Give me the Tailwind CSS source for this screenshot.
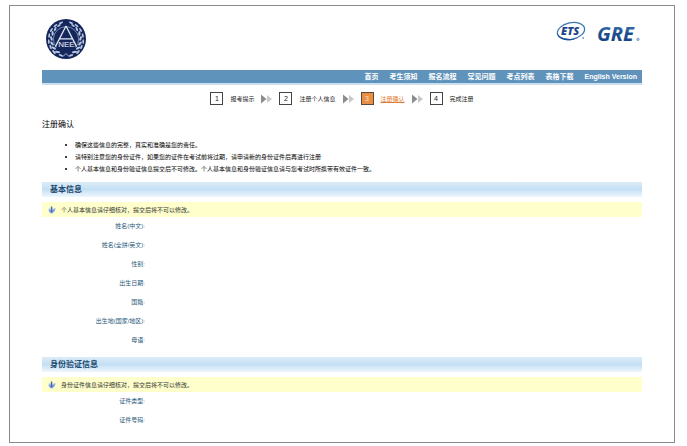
<!DOCTYPE html>
<html lang="zh-CN">
<head>
<meta charset="utf-8">
<meta name="viewport" content="width=device-width, initial-scale=1">
<title>注册确认</title>
<script src="https://cdn.jsdelivr.net/npm/@tailwindcss/browser@4"></script>
</head>
<body class="bg-white pt-[5px] font-['Liberation_Sans','Noto_Sans_CJK_SC',sans-serif] text-[6px] leading-[12px] text-[#222]">
<svg class="absolute size-0" aria-hidden="true">
  <defs>
    <linearGradient id="blue" x1="0" y1="0" x2="0" y2="1"><stop offset="0" stop-color="#4a86b8"/><stop offset=".5" stop-color="#1d4f90"/><stop offset="1" stop-color="#173c7c"/></linearGradient>
    <symbol id="arrows" viewBox="0 0 11 10"><path d="M0 0.5 5.5 5 0 9.5Z" fill="#8c8c8c"/><path d="M6 1 11 5 6 9 V1Z" fill="#c9c9c9"/></symbol>
    <symbol id="note" viewBox="0 0 8 8"><path d="M0.6 2.6 2.2 2.4 3.4 4.8 5.6 2.4 7.6 2 7 4.6 4.6 7.4 2.4 7.2 0.8 5.4Z" fill="#a3bbe4"/><path d="M2.8 0.6h1.4l.4 4.6-.8 1.4-1-1.4Z" fill="#4468b4"/><path d="M1 4.4 3.6 6.8 6.6 3.8" fill="none" stroke="#5c80c4" stroke-width=".9"/></symbol>
    <g id="leaves" fill="#b9c8e2">
      <ellipse cx="15" cy="36.4" rx="2.4" ry="1" transform="rotate(22 15 36.4)"/>
      <ellipse cx="11.6" cy="33" rx="2.6" ry="1.1" transform="rotate(5 11.6 33)"/>
      <ellipse cx="8" cy="33" rx="2.4" ry="1" transform="rotate(48 8 33)"/>
      <ellipse cx="7.8" cy="29" rx="2.5" ry="1.1" transform="rotate(28 7.8 29)"/>
      <ellipse cx="4.6" cy="28" rx="2.4" ry="1" transform="rotate(72 4.6 28)"/>
      <ellipse cx="6" cy="24.4" rx="2.4" ry="1.1" transform="rotate(48 6 24.4)"/>
      <ellipse cx="2.8" cy="22.6" rx="2.3" ry=".9" transform="rotate(88 2.8 22.6)"/>
      <ellipse cx="5.4" cy="19.4" rx="2.4" ry="1.1" transform="rotate(68 5.4 19.4)"/>
      <ellipse cx="3.2" cy="16.6" rx="2.3" ry=".9" transform="rotate(100 3.2 16.6)"/>
      <ellipse cx="6.6" cy="14.4" rx="2.4" ry="1.1" transform="rotate(90 6.6 14.4)"/>
      <ellipse cx="5.4" cy="11" rx="2.3" ry=".9" transform="rotate(120 5.4 11)"/>
      <ellipse cx="9.2" cy="10" rx="2.3" ry="1" transform="rotate(115 9.2 10)"/>
      <ellipse cx="9.4" cy="6.6" rx="2.3" ry=".9" transform="rotate(140 9.4 6.6)"/>
      <ellipse cx="13" cy="6.6" rx="2.1" ry=".9" transform="rotate(145 13 6.6)"/>
      <ellipse cx="15" cy="3.8" rx="2.2" ry=".9" transform="rotate(160 15 3.8)"/>
    </g>
  </defs>
</svg>

<div class="ml-[9px] mr-3 border border-[#8a8a8a] px-8 pb-3">
  <header>
    <div class="flex h-16 items-start justify-between pt-[13px]">
      <a href="#" aria-label="NEEA" class="ml-1">
        <svg class="size-10" viewBox="0 0 40 40">
          <circle cx="20" cy="20" r="20" fill="#15275a"/>
          <use href="#leaves"/>
          <use href="#leaves" transform="matrix(-1 0 0 1 40 0)"/>
          <path d="M10.4 28.4A12.6 12.6 0 1 1 29.6 28.4" fill="none" stroke="#8fa2ca" stroke-width=".8"/>
          <path d="M20 7 9.4 27.6M20 7 30.6 27.6M13.6 19.8h12.8" fill="none" stroke="#dfe7f5" stroke-width="1.3"/>
          <path d="m17 37.5 3-3 3 3" fill="none" stroke="#b9c8e2" stroke-width=".9"/>
          <text x="20.4" y="27.6" text-anchor="middle" font-family="Liberation Sans, sans-serif" font-size="8" fill="#f1f5fc">NEE</text>
        </svg>
      </a>
      <a href="#" aria-label="ETS GRE">
        <svg class="h-[30px] w-[88px]" viewBox="0 0 88 30">
          <ellipse cx="17" cy="12" rx="13.8" ry="8.2" transform="rotate(-12 17 12)" fill="none" stroke="#3b76b2" stroke-width="1.3"/>
          <path d="M3.2 14C4.4 21.4 15 23.4 24 19 16 21 6 20 3.2 14Z" fill="#1d4f90"/>
          <text x="7" y="16" font-family="Open Sans, sans-serif" font-size="11" font-weight="800" font-style="italic" fill="#1d4688">ETS</text>
          <circle cx="29.2" cy="19" r=".9" fill="#7b9cc5"/>
          <text x="43" y="22" font-family="Open Sans, sans-serif" font-size="20" font-weight="700" font-style="italic" fill="url(#blue)">GRE</text>
          <circle cx="84" cy="20.4" r="1.3" fill="#9db5d3" stroke="#6f93bf" stroke-width=".5"/>
        </svg>
      </a>
    </div>
    <nav aria-label="主导航" class="flex h-[15px] items-center justify-end gap-[11px] border-b-2 border-[#cbdfee] bg-[#5f93bb] pr-[5px] text-[7px] font-bold text-white">
      <a href="#">首页</a>
      <a href="#">考生须知</a>
      <a href="#">报名流程</a>
      <a href="#">常见问题</a>
      <a href="#">考点列表</a>
      <a href="#">表格下载</a>
      <a href="#">English Version</a>
    </nav>
  </header>

  <ol class="mt-[7px] flex items-center justify-center gap-[7px]">
    <li class="flex items-center gap-[7px]"><span class="flex size-[13px] items-center justify-center border border-[#444] text-[7px]">1</span>报考提示<svg class="h-[10px] w-[11px]"><use href="#arrows"/></svg></li>
    <li class="flex items-center gap-[7px]"><span class="flex size-[13px] items-center justify-center border border-[#444] text-[7px]">2</span>注册个人信息<svg class="h-[10px] w-[11px]"><use href="#arrows"/></svg></li>
    <li class="flex items-center gap-[7px]" aria-current="step"><span class="flex size-[13px] items-center justify-center border border-[#5c4a3c] bg-[#ea8e43] text-[7px] text-[#fbe3cd]">3</span><a href="#" class="text-[#e07c33] underline">注册确认</a><svg class="h-[10px] w-[11px]"><use href="#arrows"/></svg></li>
    <li class="flex items-center gap-[7px]"><span class="flex size-[13px] items-center justify-center border border-[#444] text-[7px]">4</span>完成注册</li>
  </ol>

  <main>
    <h1 class="mt-[14px] text-[8px] text-black">注册确认</h1>
    <ul class="mt-2 list-none text-black">
      <li class="flex items-center pl-[23px]"><span class="mr-2 size-[2px] rounded-full bg-black"></span>确保这些信息的完整，真实和准确是您的责任。</li>
      <li class="flex items-center pl-[23px]"><span class="mr-2 size-[2px] rounded-full bg-black"></span>请特别注意您的身份证件，如果您的证件在考试前将过期，请申请新的身份证件后再进行注册</li>
      <li class="flex items-center pl-[23px]"><span class="mr-2 size-[2px] rounded-full bg-black"></span>个人基本信息和身份验证信息提交后不可修改。个人基本信息和身份验证信息请与您考试时所携带有效证件一致。</li>
    </ul>

    <section class="mt-[7px]">
      <h2 class="flex h-[15px] items-center bg-linear-to-b from-[#dcecf8] via-[#c4dff3] to-[#eff7fd] pl-2 text-[8px] font-bold text-[#1c4a70]">基本信息</h2>
      <p class="mt-[5px] flex h-[15px] items-center gap-[5px] bg-[#ffffcb] pl-[6px] text-[#333]"><svg class="size-[8px]"><use href="#note"/></svg>个人基本信息请仔细核对，提交后将不可以修改。</p>
      <dl class="grid grid-cols-[103px_1fr] text-[#28597a]">
        <dt class="h-[19px] text-right leading-[19px]">姓名(中文):</dt><dd></dd>
        <dt class="h-[19px] text-right leading-[19px]">姓名(全拼/英文):</dt><dd></dd>
        <dt class="h-[19px] text-right leading-[19px]">性别:</dt><dd></dd>
        <dt class="h-[19px] text-right leading-[19px]">出生日期:</dt><dd></dd>
        <dt class="h-[19px] text-right leading-[19px]">国籍:</dt><dd></dd>
        <dt class="h-[19px] text-right leading-[19px]">出生地(国家/地区):</dt><dd></dd>
        <dt class="h-[19px] text-right leading-[19px]">母语:</dt><dd></dd>
      </dl>
    </section>

    <section class="mt-[7px]">
      <h2 class="flex h-[15px] items-center bg-linear-to-b from-[#dcecf8] via-[#c4dff3] to-[#eff7fd] pl-2 text-[8px] font-bold text-[#1c4a70]">身份验证信息</h2>
      <p class="mt-[5px] flex h-[15px] items-center gap-[5px] bg-[#ffffcb] pl-[6px] text-[#333]"><svg class="size-[8px]"><use href="#note"/></svg>身份证件信息请仔细核对，提交后将不可以修改。</p>
      <dl class="grid grid-cols-[103px_1fr] text-[#28597a]">
        <dt class="h-[19px] text-right leading-[19px]">证件类型:</dt><dd></dd>
        <dt class="h-[19px] text-right leading-[19px]">证件号码:</dt><dd></dd>
      </dl>
    </section>
  </main>
</div>
</body>
</html>
